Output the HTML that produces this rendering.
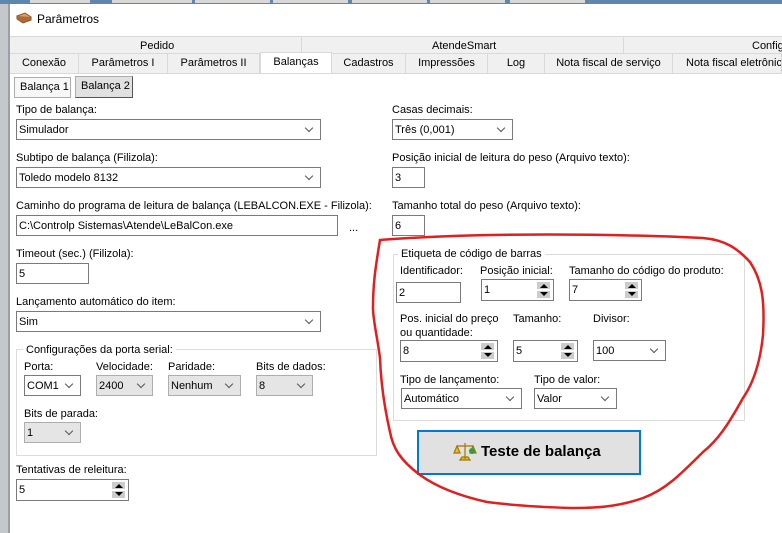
<!DOCTYPE html>
<html><head><meta charset="utf-8">
<style>
*{box-sizing:border-box}
body{margin:0;width:782px;height:533px;overflow:hidden;position:relative;background:#fff;font-family:"Liberation Sans",sans-serif;font-size:11px;color:#000}
.a{position:absolute;white-space:nowrap}
.lbl{position:absolute;white-space:nowrap;font-size:11px;line-height:14px}
.box{position:absolute;border:1px solid #7a7a7a;background:#fff;font-size:11px;line-height:20px;padding-left:2px;white-space:nowrap}
.sel:after{content:"";position:absolute;right:8px;top:5px;width:5px;height:5px;border-right:1px solid #555;border-bottom:1px solid #555;transform:rotate(45deg)}
.dis{background:#e5e5e5;border-color:#adadad}
.spin:after{content:"";position:absolute;right:3px;top:2px;width:13px;height:16px;background:linear-gradient(#ccc,#ccc) 0 0/13px 7px no-repeat,linear-gradient(#ccc,#ccc) 0 9px/13px 7px no-repeat;}
.spin .ar{position:absolute;right:5px;top:4px;width:0;height:0;border:4px solid transparent;border-bottom:4px solid #000;border-top:0;z-index:2}
.spin .ar2{position:absolute;right:5px;top:12px;width:0;height:0;border:4px solid transparent;border-top:4px solid #000;border-bottom:0;z-index:2}
.tab{position:absolute;top:54px;height:19px;border-right:1px solid #d9d9d9;background:#f0f0f0;text-align:center;line-height:18px;font-size:11px;white-space:nowrap;overflow:hidden}
.grp{position:absolute;border:1px solid #dcdcdc}
.gt{position:absolute;background:#fff;padding:0 3px;font-size:11px;line-height:14px;white-space:nowrap}
</style></head><body>
<div class="a" style="left:0;top:0;width:782px;height:4px;background:#5f86ad"></div>
<div class="a" style="left:30px;top:0;width:60px;height:3px;background:#d8d8d8"></div>
<div class="a" style="left:112px;top:0;width:80px;height:3px;background:#d8d8d8"></div>
<div class="a" style="left:195px;top:0;width:75px;height:3px;background:#d8d8d8"></div>
<div class="a" style="left:273px;top:0;width:75px;height:3px;background:#d8d8d8"></div>
<div class="a" style="left:352px;top:0;width:75px;height:3px;background:#d8d8d8"></div>
<div class="a" style="left:430px;top:0;width:75px;height:3px;background:#d8d8d8"></div>
<div class="a" style="left:510px;top:0;width:75px;height:3px;background:#d8d8d8"></div>
<div class="a" style="left:0;top:4px;width:8px;height:529px;background:#c4c8cc"></div>
<div class="a" style="left:8px;top:4px;width:2px;height:529px;background:#9aa0a6"></div>
<div class="a" style="left:10px;top:4px;width:772px;height:30px;background:#fff"></div>
<svg class="a" style="left:16px;top:12px" width="16" height="12"><path d="M1 4 L9 1 L15 5 L7 9 Z" fill="#d9a25c" stroke="#8a5a2a"/><path d="M1 4 L1 7 L7 11 L15 8 L15 5" fill="#b06a3a" stroke="#8a5a2a"/></svg>
<div class="lbl" style="left:37px;top:12px;font-size:12px">Parâmetros</div>
<div class="a" style="left:10px;top:36px;width:772px;height:37px;background:#f0f0f0;border-top:1px solid #d9d9d9"></div>
<div class="a" style="left:10px;top:53px;width:772px;height:1px;background:#d9d9d9"></div>
<div class="a" style="left:301px;top:36px;width:1px;height:17px;background:#d9d9d9"></div>
<div class="a" style="left:623px;top:36px;width:1px;height:17px;background:#d9d9d9"></div>
<div class="lbl" style="left:140px;top:39px">Pedido</div>
<div class="lbl" style="left:432px;top:39px">AtendeSmart</div>
<div class="lbl" style="left:752px;top:39px">Config</div>
<div class="tab" style="left:10px;width:69px">Conexão</div>
<div class="tab" style="left:79px;width:89px">Parâmetros I</div>
<div class="tab" style="left:168px;width:92px">Parâmetros II</div>
<div class="tab" style="left:260px;width:72px;top:52px;height:21px;background:#fff;border:1px solid #d9d9d9;border-bottom:none">Balanças</div>
<div class="tab" style="left:332px;width:74px">Cadastros</div>
<div class="tab" style="left:406px;width:82px">Impressões</div>
<div class="tab" style="left:488px;width:57px">Log</div>
<div class="tab" style="left:545px;width:128px">Nota fiscal de serviço</div>
<div class="tab" style="left:673px;width:109px;text-align:left;padding-left:13px">Nota fiscal eletrônica</div>
<div class="a" style="left:10px;top:73px;width:772px;height:1px;background:#d9d9d9"></div>
<div class="a" style="left:14px;top:77px;width:57px;height:21px;border:1px solid #adadad;background:#f7f7f7;font-size:11px;line-height:19px;padding-left:5px">Balança 1</div>
<div class="a" style="left:75px;top:76px;width:58px;height:22px;border:1px solid #adadad;border-right-color:#555;border-bottom-color:#555;background:#e1e1e1;font-size:11px;line-height:19px;padding-left:5px">Balança 2</div>

<div class="lbl" style="left:16px;top:103px">Tipo de balança:</div>
<div class="box sel" style="left:16px;top:119px;width:305px;height:21px">Simulador</div>
<div class="lbl" style="left:16px;top:151px">Subtipo de balança (Filizola):</div>
<div class="box sel" style="left:16px;top:167px;width:305px;height:21px">Toledo modelo 8132</div>
<div class="lbl" style="left:16px;top:199px">Caminho do programa de leitura de balança (LEBALCON.EXE - Filizola):</div>
<div class="box" style="left:16px;top:215px;width:322px;height:21px">C:\Controlp Sistemas\Atende\LeBalCon.exe</div>
<div class="lbl" style="left:349px;top:221px">...</div>
<div class="lbl" style="left:16px;top:247px">Timeout (sec.) (Filizola):</div>
<div class="box" style="left:16px;top:263px;width:73px;height:21px">5</div>
<div class="lbl" style="left:16px;top:295px">Lançamento automático do item:</div>
<div class="box sel" style="left:16px;top:311px;width:305px;height:21px">Sim</div>

<div class="grp" style="left:16px;top:349px;width:361px;height:107px"></div>
<div class="gt" style="left:23px;top:343px">Configurações da porta serial:</div>
<div class="lbl" style="left:24px;top:360px">Porta:</div>
<div class="lbl" style="left:96px;top:360px">Velocidade:</div>
<div class="lbl" style="left:168px;top:360px">Paridade:</div>
<div class="lbl" style="left:256px;top:360px">Bits de dados:</div>
<div class="box sel" style="left:24px;top:375px;width:57px;height:21px">COM1</div>
<div class="box sel dis" style="left:96px;top:375px;width:57px;height:21px">2400</div>
<div class="box sel dis" style="left:168px;top:375px;width:73px;height:21px">Nenhum</div>
<div class="box sel dis" style="left:256px;top:375px;width:57px;height:21px">8</div>
<div class="lbl" style="left:24px;top:407px">Bits de parada:</div>
<div class="box sel dis" style="left:24px;top:422px;width:57px;height:21px">1</div>
<div class="lbl" style="left:16px;top:463px">Tentativas de releitura:</div>
<div class="box spin" style="left:16px;top:479px;width:113px;height:22px">5<i class="ar"></i><i class="ar2"></i></div>

<div class="lbl" style="left:392px;top:103px">Casas decimais:</div>
<div class="box sel" style="left:392px;top:119px;width:121px;height:21px">Três (0,001)</div>
<div class="lbl" style="left:392px;top:151px">Posição inicial de leitura do peso (Arquivo texto):</div>
<div class="box" style="left:392px;top:167px;width:33px;height:21px">3</div>
<div class="lbl" style="left:392px;top:199px">Tamanho total do peso (Arquivo texto):</div>
<div class="box" style="left:392px;top:215px;width:33px;height:21px">6</div>

<div class="grp" style="left:393px;top:254px;width:352px;height:167px"></div>
<div class="gt" style="left:398px;top:247px">Etiqueta de código de barras</div>
<div class="lbl" style="left:400px;top:264px">Identificador:</div>
<div class="lbl" style="left:480px;top:264px">Posição inicial:</div>
<div class="lbl" style="left:569px;top:264px">Tamanho do código do produto:</div>
<div class="box" style="left:396px;top:282px;width:65px;height:21px;line-height:21px">2</div>
<div class="box spin" style="left:481px;top:279px;width:73px;height:22px">1<i class="ar"></i><i class="ar2"></i></div>
<div class="box spin" style="left:569px;top:279px;width:73px;height:22px">7<i class="ar"></i><i class="ar2"></i></div>
<div class="lbl" style="left:400px;top:312px">Pos. inicial do preço<br>ou quantidade:</div>
<div class="lbl" style="left:513px;top:312px">Tamanho:</div>
<div class="lbl" style="left:593px;top:312px">Divisor:</div>
<div class="box spin" style="left:400px;top:340px;width:98px;height:22px">8<i class="ar"></i><i class="ar2"></i></div>
<div class="box spin" style="left:513px;top:340px;width:65px;height:22px">5<i class="ar"></i><i class="ar2"></i></div>
<div class="box sel" style="left:593px;top:340px;width:73px;height:21px">100</div>
<div class="lbl" style="left:400px;top:373px">Tipo de lançamento:</div>
<div class="lbl" style="left:534px;top:373px">Tipo de valor:</div>
<div class="box sel" style="left:401px;top:388px;width:121px;height:21px">Automático</div>
<div class="box sel" style="left:534px;top:388px;width:83px;height:21px">Valor</div>

<div class="a" style="left:417px;top:430px;width:224px;height:45px;border:2px solid #0078d7;background:#e1e1e1"></div>
<svg class="a" style="left:453px;top:441px" width="24" height="22"><path d="M12 2 V18 M4 5 H20 M4 5 L1 12 H7 Z M20 5 L17 12 H23 Z M7 19 H17 L15 16 H9 Z" stroke="#a07800" fill="#e8c030" stroke-width="1.2"/><circle cx="19" cy="10" r="3" fill="#3a9a3a"/></svg>
<div class="lbl" style="left:481px;top:443px;font-size:15px;line-height:18px;font-weight:bold">Teste de balança</div>

<svg class="a" style="left:0;top:0" width="782" height="533"><path d="M380 240 C480 232 620 234 703 238 C725 240 737 248 750 262 C762 280 765 300 763 335 C760 365 752 385 743 398 C728 425 718 440 703 452 C680 475 665 490 643 498 C615 508 590 508 570 508 C540 507 510 505 487 502 C460 496 438 488 420 475 C400 460 393 448 390 432 C385 410 381 385 380 358 C377 335 373 320 373 308 C373 285 375 270 380 240 Z" fill="none" stroke="#e02020" stroke-width="2.5"/></svg>
</body></html>
